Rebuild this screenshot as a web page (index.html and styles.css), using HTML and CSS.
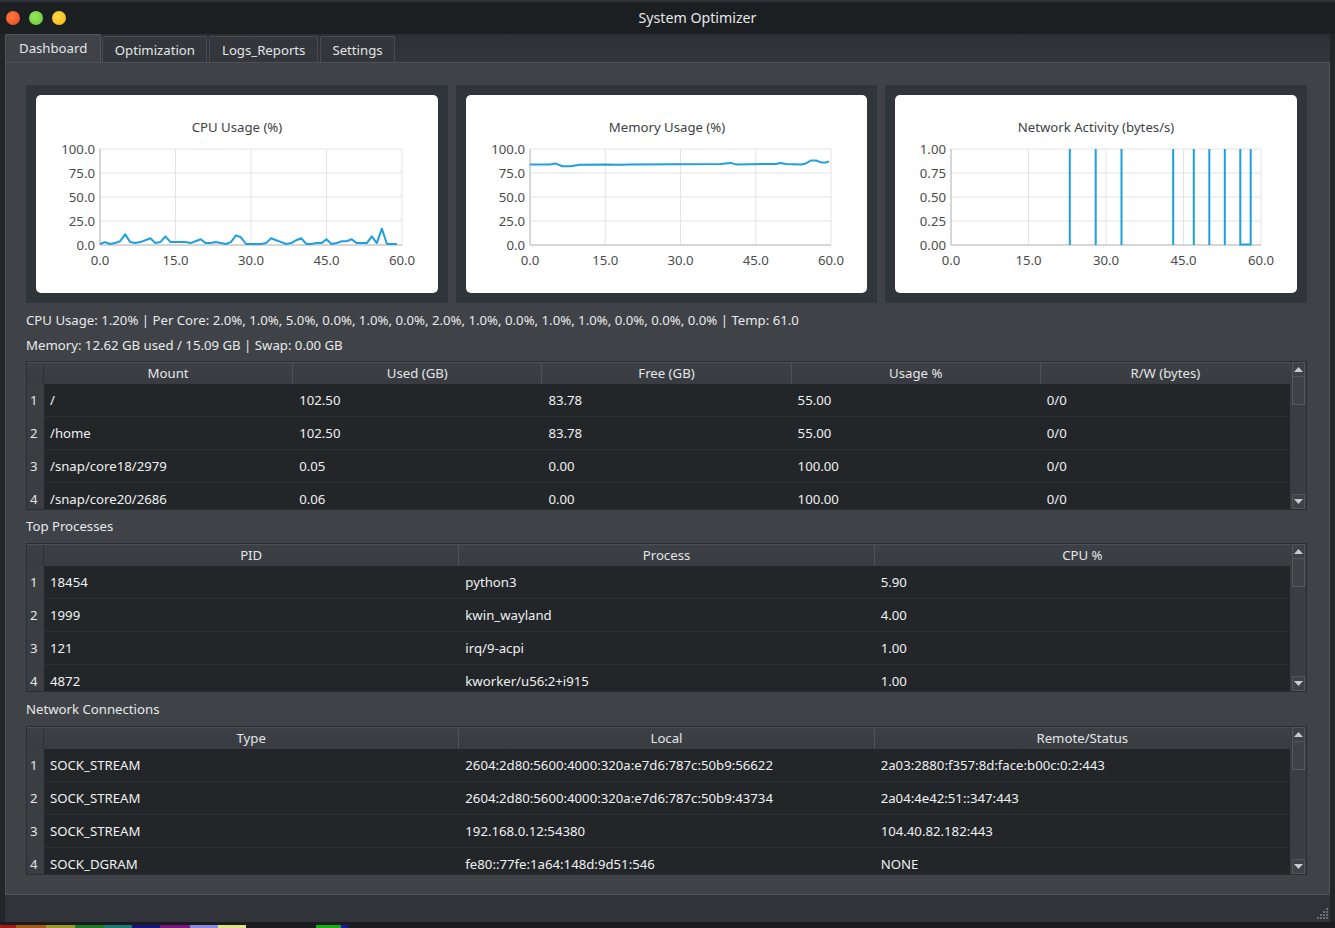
FILE: index.html
```html
<!DOCTYPE html>
<html>
<head>
<meta charset="utf-8">
<title>System Optimizer</title>
<link rel="stylesheet" href="styles.css">
</head>
<body>
<div class="window">
  <div class="titlebar">
    <div class="lights">
      <span class="light red"></span>
      <span class="light green"></span>
      <span class="light yellow"></span>
    </div>
    <div class="title">System Optimizer</div>
  </div>
  <div class="main">
    <div class="tabs">
      <div class="tab active">Dashboard</div>
      <div class="tab">Optimization</div>
      <div class="tab">Logs_Reports</div>
      <div class="tab">Settings</div>
    </div>
    <div class="pane">
      <div class="charts">
        <div class="frame">
          <div class="card">
            <svg class="chart" width="403" height="198" viewBox="0 0 403 198">
              <text class="ctitle" x="201" y="32">CPU Usage (%)</text>
              <g class="grid">
                <line x1="64" y1="54" x2="366" y2="54"/>
                <line x1="64" y1="78" x2="366" y2="78"/>
                <line x1="64" y1="102" x2="366" y2="102"/>
                <line x1="64" y1="126" x2="366" y2="126"/>
                <line x1="139.5" y1="54" x2="139.5" y2="150"/>
                <line x1="215" y1="54" x2="215" y2="150"/>
                <line x1="290.5" y1="54" x2="290.5" y2="150"/>
                <line x1="366" y1="54" x2="366" y2="150"/>
              </g>
              <g class="axis">
                <line x1="64" y1="54" x2="64" y2="150"/>
                <line x1="64" y1="150" x2="366" y2="150"/>
              </g>
              <g class="ylab">
                <text x="59" y="54">100.0</text>
                <text x="59" y="78">75.0</text>
                <text x="59" y="102">50.0</text>
                <text x="59" y="126">25.0</text>
                <text x="59" y="150">0.0</text>
              </g>
              <g class="xlab">
                <text x="64" y="165">0.0</text>
                <text x="139.5" y="165">15.0</text>
                <text x="215" y="165">30.0</text>
                <text x="290.5" y="165">45.0</text>
                <text x="366" y="165">60.0</text>
              </g>
              <polyline class="series" points="64,149 69,147.1 74.1,149 79.1,148.1 84.1,146.2 89.2,139.4 94.2,147.1 99.2,148.1 104.3,147.1 109.3,145.2 114.3,143.3 119.4,148.1 124.4,147.1 129.4,141.4 134.5,147.1 139.5,147.1 144.5,147.1 149.6,147.1 154.6,148.1 159.6,146.2 164.7,144.2 169.7,148.1 174.7,148.1 179.8,147.1 184.8,148.1 189.8,149 194.9,147.1 199.9,140.4 204.9,142.3 210,149 215,149 220,149 225.1,149 230.1,148.1 235.1,143.3 240.2,145.2 245.2,147.1 250.2,149 255.3,148.1 260.3,145.2 265.3,143.3 270.4,149 275.4,149 280.4,148.1 285.5,148.1 290.5,144.2 295.5,149 300.6,148.1 305.6,146.2 310.6,146.2 315.7,144.2 320.7,148.1 325.7,148.1 330.8,148.1 335.8,141.4 340.8,148.1 345.9,133.7 350.9,149 355.9,149 361,149"/>
            </svg>
          </div>
        </div>
        <div class="frame">
          <div class="card">
            <svg class="chart" width="403" height="198" viewBox="0 0 403 198">
              <text class="ctitle" x="201" y="32">Memory Usage (%)</text>
              <g class="grid">
                <line x1="64" y1="54" x2="365" y2="54"/>
                <line x1="64" y1="78" x2="365" y2="78"/>
                <line x1="64" y1="102" x2="365" y2="102"/>
                <line x1="64" y1="126" x2="365" y2="126"/>
                <line x1="139.25" y1="54" x2="139.25" y2="150"/>
                <line x1="214.5" y1="54" x2="214.5" y2="150"/>
                <line x1="289.75" y1="54" x2="289.75" y2="150"/>
                <line x1="365" y1="54" x2="365" y2="150"/>
              </g>
              <g class="axis">
                <line x1="64" y1="54" x2="64" y2="150"/>
                <line x1="64" y1="150" x2="365" y2="150"/>
              </g>
              <g class="ylab">
                <text x="59" y="54">100.0</text>
                <text x="59" y="78">75.0</text>
                <text x="59" y="102">50.0</text>
                <text x="59" y="126">25.0</text>
                <text x="59" y="150">0.0</text>
              </g>
              <g class="xlab">
                <text x="64" y="165">0.0</text>
                <text x="139.25" y="165">15.0</text>
                <text x="214.5" y="165">30.0</text>
                <text x="289.75" y="165">45.0</text>
                <text x="365" y="165">60.0</text>
              </g>
              <polyline class="series" points="64,69.4 84.1,69.4 89.1,68.4 96.6,71.3 104.1,71.3 114.2,69.8 139.3,69.4 154.3,69.8 164.3,69.4 254.6,68.9 264.7,67.9 269.7,69.4 309.8,68.9 314.8,67.9 319.9,68.9 334.9,69.4 339.9,68.4 344.9,65.5 350,65.5 355,67.4 360,67.4 363,66.5"/>
            </svg>
          </div>
        </div>
        <div class="frame">
          <div class="card">
            <svg class="chart" width="403" height="198" viewBox="0 0 403 198">
              <text class="ctitle" x="201" y="32">Network Activity (bytes/s)</text>
              <g class="grid">
                <line x1="56" y1="54" x2="366" y2="54"/>
                <line x1="56" y1="78" x2="366" y2="78"/>
                <line x1="56" y1="102" x2="366" y2="102"/>
                <line x1="56" y1="126" x2="366" y2="126"/>
                <line x1="133.5" y1="54" x2="133.5" y2="150"/>
                <line x1="211" y1="54" x2="211" y2="150"/>
                <line x1="288.5" y1="54" x2="288.5" y2="150"/>
                <line x1="366" y1="54" x2="366" y2="150"/>
              </g>
              <g class="axis">
                <line x1="56" y1="54" x2="56" y2="150"/>
                <line x1="56" y1="150" x2="366" y2="150"/>
              </g>
              <g class="ylab">
                <text x="51" y="54">1.00</text>
                <text x="51" y="78">0.75</text>
                <text x="51" y="102">0.50</text>
                <text x="51" y="126">0.25</text>
                <text x="51" y="150">0.00</text>
              </g>
              <g class="xlab">
                <text x="56" y="165">0.0</text>
                <text x="133.5" y="165">15.0</text>
                <text x="211" y="165">30.0</text>
                <text x="288.5" y="165">45.0</text>
                <text x="366" y="165">60.0</text>
              </g>
              <g class="spikes">
                <line x1="174.8" y1="54" x2="174.8" y2="150"/>
                <line x1="200.7" y1="54" x2="200.7" y2="150"/>
                <line x1="226.5" y1="54" x2="226.5" y2="150"/>
                <line x1="278.2" y1="54" x2="278.2" y2="150"/>
                <line x1="298.8" y1="54" x2="298.8" y2="150"/>
                <line x1="314.3" y1="54" x2="314.3" y2="150"/>
                <line x1="329.8" y1="54" x2="329.8" y2="150"/>
              </g>
              <polyline class="series" points="345.3,54 345.3,149.5 355.7,149.5 355.7,54"/>
            </svg>
          </div>
        </div>
      </div>

      <div class="info first">CPU Usage: 1.20% | Per Core: 2.0%, 1.0%, 5.0%, 0.0%, 1.0%, 0.0%, 2.0%, 1.0%, 0.0%, 1.0%, 1.0%, 0.0%, 0.0%, 0.0% | Temp: 61.0</div>
      <div class="info">Memory: 12.62 GB used / 15.09 GB | Swap: 0.00 GB</div>

      <div class="table">
        <div class="tview">
          <div class="thead cols5"><div class="corner"></div><div class="hcell">Mount</div><div class="hcell">Used (GB)</div><div class="hcell">Free (GB)</div><div class="hcell">Usage %</div><div class="hcell">R/W (bytes)</div></div>
          <div class="trow cols5"><div class="rh">1</div><div class="cell">/</div><div class="cell">102.50</div><div class="cell">83.78</div><div class="cell">55.00</div><div class="cell">0/0</div></div>
          <div class="trow cols5"><div class="rh">2</div><div class="cell">/home</div><div class="cell">102.50</div><div class="cell">83.78</div><div class="cell">55.00</div><div class="cell">0/0</div></div>
          <div class="trow cols5"><div class="rh">3</div><div class="cell">/snap/core18/2979</div><div class="cell">0.05</div><div class="cell">0.00</div><div class="cell">100.00</div><div class="cell">0/0</div></div>
          <div class="trow cols5"><div class="rh">4</div><div class="cell">/snap/core20/2686</div><div class="cell">0.06</div><div class="cell">0.00</div><div class="cell">100.00</div><div class="cell">0/0</div></div>
        </div>
        <div class="vscroll">
          <div class="sb-btn"><svg width="9" height="5" viewBox="0 0 9 5"><polygon points="0,5 4.5,0 9,5" /></svg></div>
          <div class="sb-track"><div class="sb-handle"></div></div>
          <div class="sb-btn"><svg width="9" height="5" viewBox="0 0 9 5"><polygon points="0,0 4.5,5 9,0" /></svg></div>
        </div>
      </div>

      <div class="section">Top Processes</div>
      <div class="table">
        <div class="tview">
          <div class="thead cols3"><div class="corner"></div><div class="hcell">PID</div><div class="hcell">Process</div><div class="hcell">CPU %</div></div>
          <div class="trow cols3"><div class="rh">1</div><div class="cell">18454</div><div class="cell">python3</div><div class="cell">5.90</div></div>
          <div class="trow cols3"><div class="rh">2</div><div class="cell">1999</div><div class="cell">kwin_wayland</div><div class="cell">4.00</div></div>
          <div class="trow cols3"><div class="rh">3</div><div class="cell">121</div><div class="cell">irq/9-acpi</div><div class="cell">1.00</div></div>
          <div class="trow cols3"><div class="rh">4</div><div class="cell">4872</div><div class="cell">kworker/u56:2+i915</div><div class="cell">1.00</div></div>
        </div>
        <div class="vscroll">
          <div class="sb-btn"><svg width="9" height="5" viewBox="0 0 9 5"><polygon points="0,5 4.5,0 9,5" /></svg></div>
          <div class="sb-track"><div class="sb-handle"></div></div>
          <div class="sb-btn"><svg width="9" height="5" viewBox="0 0 9 5"><polygon points="0,0 4.5,5 9,0" /></svg></div>
        </div>
      </div>

      <div class="section second">Network Connections</div>
      <div class="table">
        <div class="tview">
          <div class="thead cols3"><div class="corner"></div><div class="hcell">Type</div><div class="hcell">Local</div><div class="hcell">Remote/Status</div></div>
          <div class="trow cols3"><div class="rh">1</div><div class="cell">SOCK_STREAM</div><div class="cell">2604:2d80:5600:4000:320a:e7d6:787c:50b9:56622</div><div class="cell">2a03:2880:f357:8d:face:b00c:0:2:443</div></div>
          <div class="trow cols3"><div class="rh">2</div><div class="cell">SOCK_STREAM</div><div class="cell">2604:2d80:5600:4000:320a:e7d6:787c:50b9:43734</div><div class="cell">2a04:4e42:51::347:443</div></div>
          <div class="trow cols3"><div class="rh">3</div><div class="cell">SOCK_STREAM</div><div class="cell">192.168.0.12:54380</div><div class="cell">104.40.82.182:443</div></div>
          <div class="trow cols3"><div class="rh">4</div><div class="cell">SOCK_DGRAM</div><div class="cell">fe80::77fe:1a64:148d:9d51:546</div><div class="cell">NONE</div></div>
        </div>
        <div class="vscroll">
          <div class="sb-btn"><svg width="9" height="5" viewBox="0 0 9 5"><polygon points="0,5 4.5,0 9,5" /></svg></div>
          <div class="sb-track"><div class="sb-handle"></div></div>
          <div class="sb-btn"><svg width="9" height="5" viewBox="0 0 9 5"><polygon points="0,0 4.5,5 9,0" /></svg></div>
        </div>
      </div>
    </div>
    <div class="statusbar">
      <svg class="grip" width="12" height="12" viewBox="0 0 12 12">
        <rect x="9" y="0" width="2" height="2"/>
        <rect x="6" y="3" width="2" height="2"/><rect x="9" y="3" width="2" height="2"/>
        <rect x="3" y="6" width="2" height="2"/><rect x="6" y="6" width="2" height="2"/><rect x="9" y="6" width="2" height="2"/>
        <rect x="0" y="9" width="2" height="2"/><rect x="3" y="9" width="2" height="2"/><rect x="6" y="9" width="2" height="2"/><rect x="9" y="9" width="2" height="2"/>
      </svg>
    </div>
  </div>
  <div class="dock">
    <span class="sw c1"></span><span class="sw c2"></span><span class="sw c3"></span><span class="sw c4"></span><span class="sw c5"></span><span class="sw c6"></span><span class="sw c7"></span><span class="sw c8"></span><span class="sw c9"></span><span class="gapsw"></span><span class="sw c10"></span><span class="sw c11"></span>
  </div>
</div>
</body>
</html>
```
FILE: styles.css
```css
* { box-sizing: border-box; }
html, body { margin: 0; padding: 0; }
body {
  background: #1b1e21;
  font-family: "Noto Sans", "Open Sans", sans-serif;
  font-size: 13.2px;
  color: #eff0f1;
}
.window {
  width: 1335px;
  height: 928px;
  display: flex;
  flex-direction: column;
  background: #1f2225;
  overflow: hidden;
}
.titlebar {
  height: 34px;
  flex: 0 0 34px;
  background: #1c1f22;
  border-top: 2px solid #2e3236;
  display: flex;
  align-items: center;
  position: relative;
}
.lights {
  display: flex;
  gap: 9px;
  padding-left: 6px;
}
.light {
  width: 14px;
  height: 14px;
  border-radius: 50%;
  display: block;
}
.light.red { background: radial-gradient(circle at 40% 40%, #ff7a3a, #e8442a); }
.light.green { background: radial-gradient(circle at 40% 40%, #9be65a, #62c43a); }
.light.yellow { background: radial-gradient(circle at 40% 40%, #ffd84a, #f2b512); }
.title {
  position: absolute;
  left: 60px;
  right: 0;
  top: 6px;
  text-align: center;
  font-size: 14.2px;
  color: #e6e7e8;
  pointer-events: none;
}
.main {
  flex: 1;
  display: flex;
  flex-direction: column;
  background: #2f3337;
  border-left: 5px solid #232629;
  border-right: 5px solid #232629;
}
.tabs {
  height: 28px;
  flex: 0 0 28px;
  display: flex;
  align-items: flex-end;
  gap: 2px;
  background: linear-gradient(#2c3034, #33373b);
}
.tab {
  height: 26px;
  padding: 0 11.5px;
  display: flex;
  align-items: center;
  background: #33373b;
  border: 1px solid #484c51;
  border-bottom: none;
  border-radius: 2px 2px 0 0;
  color: #e4e5e7;
}
.tab.active {
  height: 28px;
  padding: 0 13px 2px 13px;
  background: #3f4347;
  border-color: #52575c;
  margin-right: -1px;
}
.pane {
  height: 833px;
  flex: 0 0 833px;
  background: #3f4347;
  border: 1px solid #4c5156;
  padding: 22px 22px 19px 20px;
  display: flex;
  flex-direction: column;
}
.charts {
  display: grid;
  grid-template-columns: 422px 421px 422px;
  gap: 8px;
  height: 218px;
  flex: 0 0 218px;
}
.frame {
  background: #30353a;
  padding: 10px;
}
.card {
  background: #ffffff;
  border-radius: 5px;
  height: 198px;
  overflow: hidden;
}
.chart { display: block; font-family: "Noto Sans", "Open Sans", sans-serif; }
.ctitle { font-size: 13.2px; fill: #404244; text-anchor: middle; dominant-baseline: central; }
.grid line { stroke: #e3e3e3; stroke-width: 1; }
.axis line { stroke: #c9c9c9; stroke-width: 1.5; }
.ylab text { font-size: 13.2px; fill: #4a4c4e; text-anchor: end; dominant-baseline: central; }
.xlab text { font-size: 13.2px; fill: #4a4c4e; text-anchor: middle; dominant-baseline: central; }
.series { fill: none; stroke: #209fdf; stroke-width: 2; stroke-linejoin: round; }
.spikes line { stroke: #209fdf; stroke-width: 2; }
.info {
  height: 25px;
  flex: 0 0 25px;
  line-height: 25px;
  color: #e8e9ea;
  white-space: nowrap;
}
.info.first { margin-top: 5px; }
.info + .table { margin-top: 3px; }
.section {
  height: 33px;
  flex: 0 0 33px;
  line-height: 33px;
  color: #e8e9ea;
}
.section.second { height: 34px; flex-basis: 34px; line-height: 34px; }
.table {
  height: 149px;
  flex: 0 0 149px;
  display: flex;
  background: #232629;
  border: 1px solid #2a2d31;
  overflow: hidden;
}
.tview {
  flex: 1;
  overflow: hidden;
}
.cols5 { display: grid; grid-template-columns: 17px repeat(5, 1fr); }
.cols3 { display: grid; grid-template-columns: 17px repeat(3, 1fr); }
.thead {
  height: 22px;
  background: linear-gradient(#3d4146, #383c41);
  border-top: 1px solid #4b5055;
}
.thead .corner { border-right: 1px solid #2e3236; }
.hcell {
  text-align: center;
  line-height: 20px;
  color: #e4e5e7;
  border-right: 1px solid #4d5257;
  white-space: nowrap;
  overflow: hidden;
}
.hcell:last-child { border-right: none; }
.trow {
  height: 33px;
  border-bottom: 1px solid #2c3034;
}
.rh {
  background: #3a3e43;
  border-bottom: 1px solid #2e3236;
  margin-bottom: -1px;
  padding-left: 3px;
  line-height: 33px;
  color: #e4e5e7;
}
.cell {
  padding-left: 6px;
  line-height: 32px;
  white-space: nowrap;
  overflow: hidden;
  color: #eff0f1;
}
.vscroll {
  width: 16px;
  flex: 0 0 16px;
  background: #3a3e43;
  display: flex;
  flex-direction: column;
  padding: 0 1px 0 2px;
}
.sb-btn {
  height: 15px;
  flex: 0 0 15px;
  display: flex;
  align-items: center;
  justify-content: center;
  border: 1px solid #50555a;
  background: #3e4247;
}
.sb-btn svg polygon { fill: #c9cbcd; }
.sb-track { flex: 1; }
.sb-handle {
  height: 28px;
  background: #3e4247;
  border: 1px solid #55595e;
  border-top: none;
}
.statusbar {
  flex: 1;
  background: #303438;
  display: flex;
  justify-content: flex-end;
  align-items: flex-end;
  padding: 0 1px 2px 0;
}
.grip rect { fill: #6a6f74; }
.dock {
  height: 6px;
  flex: 0 0 6px;
  background: #1a1c1f;
  display: flex;
  align-items: flex-end;
}
.sw { display: block; height: 3px; }
.gapsw { display: block; width: 70px; height: 3px; }
.c1 { width: 16px; background: #a8161a; }
.c2 { width: 30px; background: #a85a18; }
.c3 { width: 29px; background: #9a9a24; }
.c4 { width: 29px; background: #1f7a24; }
.c5 { width: 28px; background: #1f7a7a; }
.c6 { width: 28px; background: #14147e; }
.c7 { width: 30px; background: #7e147e; }
.c8 { width: 28px; background: #8a8ae0; }
.c9 { width: 28px; background: #e2e28a; }
.c10 { width: 25px; background: #16b016; }
.c11 { width: 7px; background: #1616a0; }
```
